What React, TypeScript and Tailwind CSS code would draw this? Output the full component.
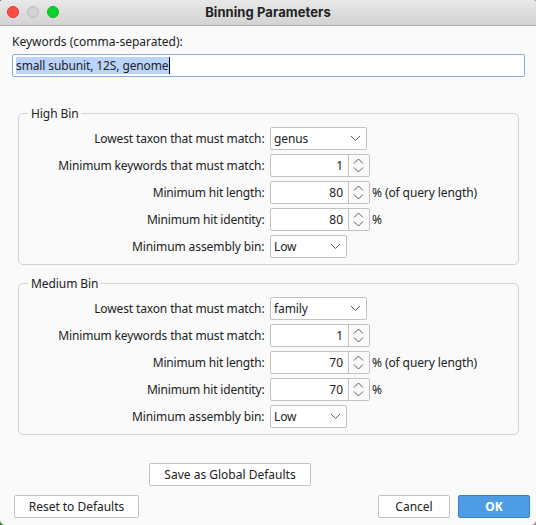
import type { ReactNode } from "react";

function Row({ label, tracking = "tracking-[-0.13px]", children }: { label: string; tracking?: string; children: ReactNode }) {
  return (
    <div className="flex h-[23px] items-center">
      <span className={`w-[245.5px] text-right ${tracking}`}>{label}</span>
      <div className="ml-[5.5px] flex items-center">{children}</div>
    </div>
  );
}

function Combo({ value, width }: { value: string; width: string }) {
  return (
    <div className={`flex h-[23px] items-center justify-between rounded-[2px] border border-[#c2c2c2] bg-white pr-[5px] pl-[3px] ${width}`}>
      <span className="tracking-[-0.1px]">{value}</span>
      <svg width="11" height="7" viewBox="0 0 11 7" fill="none" stroke="#5c5c5c" strokeWidth="1">
        <path d="M1 1 L5.5 5.5 L10 1" />
      </svg>
    </div>
  );
}

function Spinner({ value }: { value: string }) {
  return (
    <div className="flex h-[23px] w-[100px] overflow-hidden rounded-[2px] border border-[#c2c2c2] bg-white">
      <span className="flex flex-1 items-center justify-end pr-[5px]">{value}</span>
      <div className="flex w-[21px] items-center justify-center border-l border-[#c2c2c2] bg-[#fafafa] pr-px">
        <svg width="11" height="15" viewBox="0 0 11 15" fill="none" stroke="#5c5c5c" strokeWidth="1">
          <path d="M1 5.5 L5.5 1 L10 5.5 M1 9.5 L5.5 14 L10 9.5" />
        </svg>
      </div>
    </div>
  );
}

function Bin({ title, taxon, percent }: { title: string; taxon: string; percent: string }) {
  return (
    <section className="relative ml-[18px] h-[152px] w-[501px] rounded-[5px] border border-[#d3d3d3] pt-[13px]">
      <h2 className="absolute top-[-9px] left-[9px] bg-[#fafafa] pr-[2px] pl-[3px] leading-[17px] tracking-[-0.08px]">{title}</h2>
      <div className="flex flex-col gap-1">
        <Row label="Lowest taxon that must match:">
          <Combo value={taxon} width="w-[97px]" />
        </Row>
        <Row label="Minimum keywords that must match:">
          <Spinner value="1" />
        </Row>
        <Row label="Minimum hit length:" tracking="tracking-[-0.17px]">
          <Spinner value={percent} />
          <span className="ml-[2px] tracking-[-0.1px]">% (of query length)</span>
        </Row>
        <Row label="Minimum hit identity:" tracking="tracking-[-0.17px]">
          <Spinner value={percent} />
          <span className="ml-[2px]">%</span>
        </Row>
        <Row label="Minimum assembly bin:" tracking="tracking-[-0.09px]">
          <Combo value="Low" width="w-[77px]" />
        </Row>
      </div>
    </section>
  );
}

function Button({ children, className }: { children: ReactNode; className: string }) {
  return (
    <button className={`flex h-[23px] items-center justify-center rounded-[2px] border ${className}`}>{children}</button>
  );
}

export default function App() {
  return (
    <div className="h-[525px] w-[536px] bg-linear-to-r from-[#2f7d2f] to-[#8a8a8a] to-10%">
      <div className="flex h-full flex-col overflow-hidden rounded-t-[3px] rounded-b-[5px] bg-[#fafafa] font-['Noto_Sans',sans-serif] text-[12px] leading-[17px] whitespace-nowrap text-[#222]">
        <header className="grid h-[26px] shrink-0 grid-cols-[1fr_auto_1fr] items-center border-b border-[#adadad] bg-linear-to-b from-[#e8e8e8] to-[#d3d3d3] pb-px">
          <div className="flex gap-2 pl-[7px]">
            <span className="size-3 rounded-full border border-[#e4342f] bg-[#ff4c46]" />
            <span className="size-3 rounded-full border border-[#b9b9b9] bg-[#d3d3d3]" />
            <span className="size-3 rounded-full border border-[#14b224] bg-[#06d32c]" />
          </div>
          <h1 className="font-['Inter',sans-serif] text-[13px] font-bold tracking-[0.08px]">Binning Parameters</h1>
        </header>

        <label className="mt-[7px] ml-3">Keywords (comma-separated):</label>
        <div className="mt-1 ml-3 flex h-[23px] w-[513px] shrink-0 items-center rounded-[2px] border border-[#87afda] bg-white pl-[3px]">
          <span className="border-r border-black bg-[#bbd4fb] tracking-[-0.12px]">small subunit, 12S, genome</span>
        </div>

        <main className="mt-9 flex flex-col gap-[18px]">
          <Bin title="High Bin" taxon="genus" percent="80" />
          <Bin title="Medium Bin" taxon="family" percent="70" />
        </main>

        <Button className="mt-7 ml-[149px] w-[162px] shrink-0 border-[#c2c2c2] bg-white">Save as Global Defaults</Button>
        <footer className="mt-[9px] flex pr-[6px] pl-[14px]">
          <Button className="w-[125px] border-[#c2c2c2] bg-white tracking-[-0.03px]">Reset to Defaults</Button>
          <Button className="ml-auto w-[72px] border-[#c2c2c2] bg-white">Cancel</Button>
          <Button className="ml-2 w-[72px] border-[#3b7fc4] bg-[#4e9de4] font-bold text-white">OK</Button>
        </footer>
      </div>
    </div>
  );
}
